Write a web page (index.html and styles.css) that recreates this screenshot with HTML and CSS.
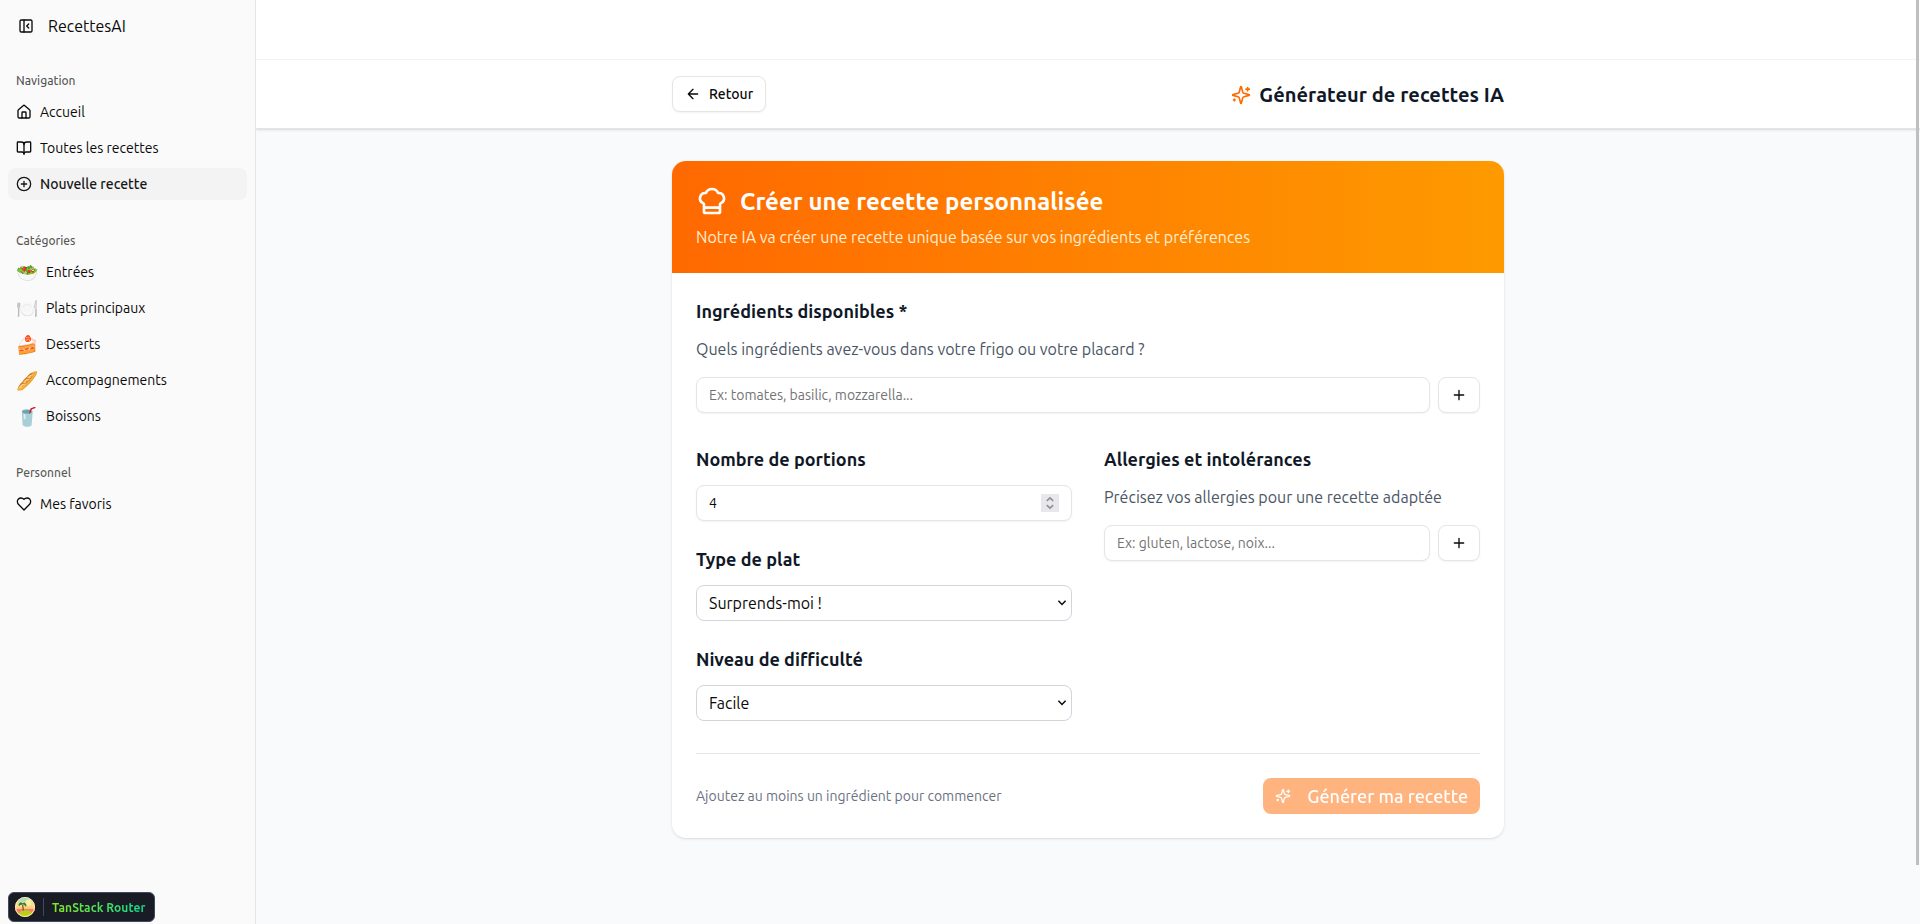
FILE: index.html
```html
<!DOCTYPE html>
<html lang="fr">
<head>
<meta charset="utf-8">
<title>RecettesAI</title>
<link rel="stylesheet" href="styles.css">
</head>
<body>
<svg class="defs" aria-hidden="true">
  <symbol id="sparkles" viewBox="0 0 24 24"><path d="M9.937 15.5A2 2 0 0 0 8.5 14.063l-6.135-1.582a.5.5 0 0 1 0-.962L8.5 9.936A2 2 0 0 0 9.937 8.5l1.582-6.135a.5.5 0 0 1 .963 0L14.063 8.5A2 2 0 0 0 15.5 9.937l6.135 1.581a.5.5 0 0 1 0 .964L15.5 14.063a2 2 0 0 0-1.437 1.437l-1.582 6.135a.5.5 0 0 1-.963 0z"/><path d="M20 3v4M22 5h-4M4 17v2M5 18H3"/></symbol>
  <symbol id="plus" viewBox="0 0 24 24"><path d="M5 12h14M12 5v14"/></symbol>
  <symbol id="caret" viewBox="0 0 10 8"><path d="M1.400 1.800 5 5.500l3.600-3.700"/></symbol>
</svg>
<div class="app">
  <aside class="sidebar">
    <div class="brand">
      <svg class="icon" viewBox="0 0 24 24"><rect width="18" height="18" x="3" y="3" rx="2"/><path d="M9 3v18M16 15l-3-3 3-3"/></svg>
      <span>RecettesAI</span>
    </div>
    <nav class="group">
      <div class="group-label">Navigation</div>
      <a class="item"><svg class="icon" viewBox="0 0 24 24"><path d="M15 21v-8a1 1 0 0 0-1-1h-4a1 1 0 0 0-1 1v8"/><path d="M3 10a2 2 0 0 1 .709-1.528l7-5.999a2 2 0 0 1 2.582 0l7 5.999A2 2 0 0 1 21 10v9a2 2 0 0 1-2 2H5a2 2 0 0 1-2-2z"/></svg>Accueil</a>
      <a class="item"><svg class="icon" viewBox="0 0 24 24"><path d="M12 7v14"/><path d="M3 18a1 1 0 0 1-1-1V4a1 1 0 0 1 1-1h5a4 4 0 0 1 4 4 4 4 0 0 1 4-4h5a1 1 0 0 1 1 1v13a1 1 0 0 1-1 1h-6a3 3 0 0 0-3 3 3 3 0 0 0-3-3z"/></svg>Toutes les recettes</a>
      <a class="item active"><svg class="icon" viewBox="0 0 24 24"><circle cx="12" cy="12" r="10"/><path d="M8 12h8M12 8v8"/></svg>Nouvelle recette</a>
    </nav>
    <nav class="group">
      <div class="group-label">Catégories</div>
      <a class="item"><span class="emoji">🥗</span>Entrées</a>
      <a class="item"><span class="emoji">🍽️</span>Plats principaux</a>
      <a class="item"><span class="emoji">🍰</span>Desserts</a>
      <a class="item"><span class="emoji">🥖</span>Accompagnements</a>
      <a class="item"><span class="emoji">🥤</span>Boissons</a>
    </nav>
    <nav class="group">
      <div class="group-label">Personnel</div>
      <a class="item"><svg class="icon" viewBox="0 0 24 24"><path d="M19 14c1.49-1.46 3-3.21 3-5.5A5.5 5.5 0 0 0 16.5 3c-1.76 0-3 .5-4.5 2-1.5-1.5-2.74-2-4.5-2A5.5 5.5 0 0 0 2 8.500c0 2.300 1.500 4.050 3 5.500l7 7Z"/></svg>Mes favoris</a>
    </nav>
  </aside>

  <div class="content">
    <div class="topbar"></div>
    <header class="header">
      <div class="wrap header-row">
        <button class="btn back"><svg class="icon" viewBox="0 0 24 24"><path d="m12 19-7-7 7-7M19 12H5"/></svg>Retour</button>
        <h1 class="page-title"><svg class="icon"><use href="#sparkles"/></svg>Générateur de recettes IA</h1>
      </div>
    </header>
    <main class="main">
      <section class="wrap card">
        <div class="hero">
          <h2 class="hero-title"><svg class="icon" viewBox="0 0 24 24"><path d="M17 21a1 1 0 0 0 1-1v-5.350c0-.457.316-.844.727-1.041a4 4 0 0 0-2.134-7.589 5 5 0 0 0-9.186 0 4 4 0 0 0-2.134 7.588c.411.198.727.585.727 1.041V20a1 1 0 0 0 1 1ZM6 17h12"/></svg><span>Créer une recette personnalisée</span></h2>
          <p class="hero-text">Notre IA va créer une recette unique basée sur vos ingrédients et préférences</p>
        </div>
        <div class="form">
          <div>
            <h3 class="label">Ingrédients disponibles *</h3>
            <p class="hint">Quels ingrédients avez-vous dans votre frigo ou votre placard ?</p>
            <div class="add-row">
              <input class="field" placeholder="Ex: tomates, basilic, mozzarella...">
              <button class="btn add"><svg class="icon"><use href="#plus"/></svg></button>
            </div>
          </div>
          <div class="columns">
            <div class="stack">
              <div>
                <h3 class="label">Nombre de portions</h3>
                <div class="field number"><span>4</span>
                  <svg class="spin" viewBox="0 0 18 18"><path d="M5.800 6.800 9 3.800l3.200 3M5.800 11.200l3.200 3 3.200-3"/></svg>
                </div>
              </div>
              <div>
                <h3 class="label">Type de plat</h3>
                <div class="select"><span>Surprends-moi !</span><svg class="caret"><use href="#caret"/></svg></div>
              </div>
              <div>
                <h3 class="label">Niveau de difficulté</h3>
                <div class="select"><span>Facile</span><svg class="caret"><use href="#caret"/></svg></div>
              </div>
            </div>
            <div>
              <h3 class="label">Allergies et intolérances</h3>
              <p class="hint">Précisez vos allergies pour une recette adaptée</p>
              <div class="add-row">
                <input class="field" placeholder="Ex: gluten, lactose, noix...">
                <button class="btn add"><svg class="icon"><use href="#plus"/></svg></button>
              </div>
            </div>
          </div>
          <div class="footer">
            <p class="footer-text">Ajoutez au moins un ingrédient pour commencer</p>
            <button class="generate"><svg class="icon"><use href="#sparkles"/></svg>Générer ma recette</button>
          </div>
        </div>
      </section>
    </main>
  </div>
</div>
<div class="scroll-thumb"></div>
<div class="devtools">
  <svg class="logo" viewBox="0 0 20 20">
    <defs>
      <linearGradient id="sky" x2="0" y2="1"><stop offset="0" stop-color="#7fd6cf"/><stop offset=".4" stop-color="#ffe08a"/><stop offset="1" stop-color="#ff8a5c"/></linearGradient>
      <clipPath id="disc"><circle cx="10" cy="10" r="10"/></clipPath>
    </defs>
    <g clip-path="url(#disc)">
      <rect width="20" height="20" fill="url(#sky)"/>
      <circle cx="13.500" cy="5.500" r="3" fill="#fff0a0"/>
      <rect y="12" width="20" height="8" fill="#f0806a"/>
      <ellipse cx="10.500" cy="16.500" rx="6.500" ry="3.200" fill="#b9cf16"/>
      <path d="M8.300 13.500 7.700 8" stroke="#7a4a1e" stroke-width="1.200"/>
      <path d="M7.600 7C6 5 4 6 4 8.500 5.200 7.300 6.500 7.200 7.600 7c1.300-.2 2.500.5 3 2.200.8-2.700-1-4-3-2.200Z" fill="#1c7a35" stroke="#1c7a35"/>
    </g>
    <circle cx="10" cy="10" r="9.500" fill="none" stroke="#ffe9b8"/>
  </svg>
  <span class="devtools-text"><b>TanStack Router</b></span>
</div>
</body>
</html>
```
FILE: styles.css
```css
*{box-sizing:border-box;margin:0;padding:0}
body{font-family:Ubuntu,"Open Sans",sans-serif;font-size:16px;line-height:24px;color:#0a0a0a;background:#fff;height:924px;overflow:hidden}
button,input{font:inherit;color:inherit}
.defs{position:absolute;width:0;height:0}
.icon{width:16px;height:16px;flex:none;fill:none;stroke:currentColor;stroke-width:2;stroke-linecap:round;stroke-linejoin:round}
.app{display:flex;height:924px}

.sidebar{position:relative;z-index:1;width:256px;flex:none;background:#fafafa;border-right:1px solid #e5e5e5;display:flex;flex-direction:column;gap:8px}
.brand{height:48px;padding:4px 0 0 18px;display:flex;align-items:center;gap:14px}
.group{padding:8px;display:flex;flex-direction:column;gap:4px}
.group-label{height:32px;margin-bottom:-4px;padding:2px 8px 0;display:flex;align-items:center;font-size:12px;line-height:16px;font-weight:500;color:rgba(10,10,10,.7)}
.item{height:32px;padding:0 8px;display:flex;align-items:center;gap:8px;border-radius:8px;font-size:14px;line-height:20px;color:#0a0a0a}
.item.active{background:#f3f3f3;font-weight:500;color:#171717}
.emoji{font-size:18px;line-height:28px}

.content{flex:1;display:flex;flex-direction:column;background:#f9fafb}
.topbar{height:60px;background:#fff;border-bottom:1px solid #f7f7f7}
.header{height:69px;background:#fff;border-bottom:1px solid #e5e5e5;box-shadow:0 1px 3px rgba(0,0,0,.1),0 1px 2px -1px rgba(0,0,0,.1);padding:16px 0}
.wrap{width:832px;margin:0 auto}
.header-row{display:flex;align-items:center;justify-content:space-between}
.btn{height:36px;display:flex;align-items:center;justify-content:center;gap:8px;border:1px solid #e5e5e5;border-radius:8px;background:#fff;box-shadow:0 1px 2px rgba(0,0,0,.05);font-size:14px;line-height:20px;font-weight:500}
.back{padding:0 12px}
.page-title{display:flex;align-items:center;gap:8px;padding-top:1px;font-size:20px;line-height:28px;font-weight:600;letter-spacing:.05px;color:#101828}
.page-title .icon{width:20px;height:20px;color:#ff6900}

.main{padding:32px 0}
.card{background:#fff;border-radius:14px;overflow:hidden;box-shadow:0 1px 3px rgba(0,0,0,.1),0 1px 2px -1px rgba(0,0,0,.1)}
.hero{padding:24px;color:#fff;background:linear-gradient(to right,#ff6900,#fe9a00)}
.hero-title{display:flex;align-items:center;gap:12px;height:32px;font-size:24px;line-height:32px;font-weight:600;letter-spacing:.04px;margin-bottom:8px}
.hero-title span{padding-top:2px}
.hero-title .icon{width:32px;height:32px}
.hero-text{color:#ffedd4}
.form{padding:24px;display:flex;flex-direction:column;gap:32px}
.label{font-size:18px;line-height:28px;font-weight:600;letter-spacing:.01px;color:#101828;margin-bottom:12px}
.hint{color:#4a5565;margin-bottom:16px}
.add-row{display:flex;gap:8px}
.field{flex:1;min-width:0;height:36px;padding:0 12px;border:1px solid #e5e5e5;border-radius:8px;background:#fff;box-shadow:0 1px 2px rgba(0,0,0,.05);font-size:14px;outline:0}
.field::placeholder{color:#737373}
.add{width:42px}
.columns{display:grid;grid-template-columns:1fr 1fr;gap:32px}
.stack{display:flex;flex-direction:column;gap:24px}
.number{display:flex;align-items:center;justify-content:space-between}
.spin{width:18px;height:18px;background:#e8e7ec;fill:none;stroke:#8f8e96;stroke-width:1.6}
.select{display:flex;align-items:center;justify-content:space-between;height:36px;padding:0 4px 0 12px;border:1px solid #d1d5dc;border-radius:8px;background:#fff}
.caret{width:10px;height:8px;fill:none;stroke:#0a0a0a;stroke-width:1.5}
.footer{border-top:1px solid #e5e7eb;padding-top:24px;display:flex;align-items:center;justify-content:space-between}
.footer-text{font-size:14px;line-height:20px;color:#6a7282}
.generate{height:36px;padding:0 12px;display:flex;align-items:center;gap:16px;border:0;border-radius:8px;background:#ff6900;color:#fff;font-size:18px;line-height:28px;font-weight:500;opacity:.5}

.scroll-thumb{position:absolute;top:0;right:1px;width:3px;height:865px;background:#bfbfbf}
.devtools{position:absolute;z-index:2;left:8px;top:892px;height:30px;padding:0 8px 0 6px;display:flex;align-items:center;gap:8px;background:#191c24;border:1px solid #414962;border-radius:6px}
.logo{width:20px;height:20px}
.devtools-text{border-left:1px solid #414962;padding:1px 0 0 8px;height:18px;display:flex;align-items:center;font-size:12px;line-height:18px;letter-spacing:.07px}
.devtools-text b{font-weight:700;background:linear-gradient(to right,#84e82c,#10d98e);-webkit-background-clip:text;background-clip:text;color:transparent}
```
